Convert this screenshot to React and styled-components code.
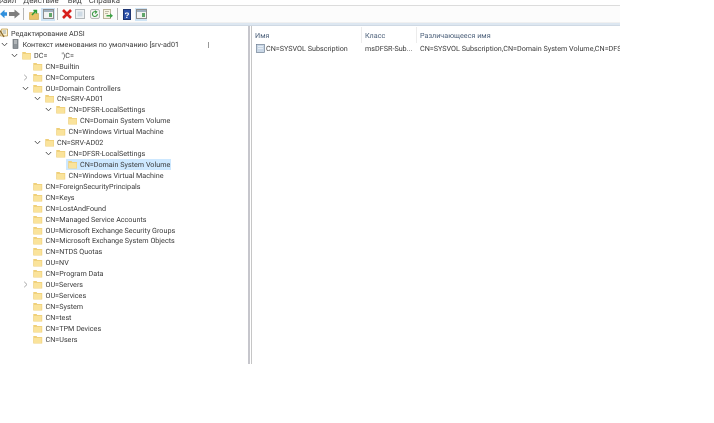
import React from "react";
import styled, { createGlobalStyle } from "styled-components";

const Global = createGlobalStyle`
  html, body { margin: 0; padding: 0; background: #fff; }
  body {
    font-family: Roboto, "Noto Sans", sans-serif;
    color: #3a3a3a;
    text-rendering: geometricPrecision;
  }
`;

const Window = styled.div`
  width: 620px;
  height: 364px;
  display: flex;
  flex-direction: column;
  overflow: hidden;
  background: #fff;
  filter: blur(0.3px);
`;

const Menu = styled.div`
  height: 5px;
  display: flex;
  overflow: hidden;
  font-size: 7.8px;
  line-height: 1px;
  color: #444;
  flex: none;
  border-bottom: 1px solid #dcdcdc;
`;

const MenuItem = styled.span`
  display: block;
  margin-left: ${(p) => p.$ml || 0}px;
`;

const Toolbar = styled.div`
  height: 16px;
  flex: none;
  display: flex;
  align-items: center;
  background: #fcfcfc;
  border-bottom: 1px solid #f0f0f0;
`;

const Tool = styled.span`
  width: ${(p) => p.$w || 10}px;
  height: 13px;
  margin-left: ${(p) => p.$ml ?? 0}px;
  flex: none;
  display: flex;
  align-items: center;
  justify-content: center;
  background: ${(p) => (p.$on ? "#cfe4f5" : "transparent")};
`;

const ToolSep = styled.span`
  width: 1px;
  height: 12px;
  margin-left: ${(p) => p.$ml}px;
  flex: none;
  background: #b5b5b5;
`;

const Band = styled.div`
  height: 2px;
  flex: none;
  background: #dde7f1;
  border-bottom: 1px solid #cfd9e4;
`;

const Split = styled.div`
  flex: 1;
  min-height: 0;
  display: flex;
`;

const TreePane = styled.div`
  width: 248px;
  flex: none;
  padding-top: 2px;
  overflow: hidden;
`;

const Splitter = styled.div`
  width: 1px;
  flex: none;
  border-left: 2px solid #c6c6cc;
  border-right: 1px solid #c6c6c6;
`;

const ListPane = styled.div`
  flex: 1;
  min-width: 0;
  overflow: hidden;
`;

const TreeRow = styled.div`
  height: 10.93px;
  display: flex;
  align-items: center;
  font-size: 7.2px;
  white-space: pre;
  padding-left: ${(p) => p.$x}px;
`;

const Arrow = styled.span`
  width: 8px;
  margin-right: 3.5px;
  flex: none;
  display: flex;
  align-items: center;
  justify-content: center;
`;

const Item = styled.span`
  display: flex;
  align-items: center;
  height: 10.5px;
  padding-left: ${(p) => (p.$sel ? 1.5 : 0)}px;
  margin-left: ${(p) => (p.$sel ? -1.5 : 0)}px;
  background: ${(p) => (p.$sel ? "#cde8ff" : "transparent")};
`;

const Label = styled.span`
  margin-left: 2px;
  padding: 0 1px;
`;

const ListGrid = styled.div`
  display: grid;
  grid-template-columns: 110px 55px 300px;
  margin-top: 1px;
  white-space: nowrap;
  font-size: 7.2px;
`;

const Head = styled.div`
  height: 16px;
  padding-left: 3px;
  display: flex;
  align-items: center;
  color: #4c607a;
  border-right: 1px solid #ececec;
  overflow: hidden;
`;

const Cell = styled.div`
  height: 10px;
  padding-left: 3px;
  display: flex;
  align-items: center;
  overflow: hidden;
`;

const ObjWrap = styled.span`
  margin: 0 1px 0 1px;
  display: flex;
  flex: none;
`;

const Folder = () => (
  <svg width="9.5" height="9" viewBox="0 0 10 9" style={{ flex: "none" }}>
    <path d="M.3 .8h3.4l.8 1h5.2v7H.3z" fill="#efcf78" />
    <path d="M1 2.8h8v5.4H1z" fill="#fae39b" />
  </svg>
);

const Chevron = ({ open }) => (
  <svg width="7" height="7" viewBox="0 0 7 7">
    {open ? (
      <path d="M.8 2l2.7 2.8L6.2 2" fill="none" stroke="#555" strokeWidth="1" />
    ) : (
      <path d="M2.2 .8L5 3.5 2.2 6.2" fill="none" stroke="#a6a6a6" strokeWidth="1" />
    )}
  </svg>
);

const Server = () => (
  <svg width="8" height="10" viewBox="0 0 8 10" style={{ flex: "none" }}>
    <rect x="1" y=".5" width="5" height="9" fill="#8e9499" stroke="#60666b" strokeWidth=".6" />
    <rect x="2" y="1.5" width="3" height="1" fill="#d5d8da" />
    <rect x="2" y="3.5" width="3" height="1" fill="#d5d8da" />
  </svg>
);

const Console = () => (
  <svg width="8" height="10" viewBox="0 0 8 10" style={{ flex: "none" }}>
    <path d="M1.5 1h6v7H.5z" fill="#fff4d2" stroke="#b58f3c" strokeWidth=".7" />
    <path d="M0 2.5l4 6.5" stroke="#8a6b2e" strokeWidth="1.4" />
    <path d="M2.5 3h3.5M3 5h3" stroke="#6b86a8" strokeWidth=".7" />
  </svg>
);

const Obj = () => (
  <svg width="9" height="9" viewBox="0 0 9 9">
    <rect x=".5" y=".5" width="8" height="8" fill="#c9d7e6" stroke="#6f8094" strokeWidth=".7" />
    <path d="M2 2.5h5M2 4.5h5" stroke="#eef3f8" strokeWidth=".8" />
  </svg>
);

const PaneIcon = () => (
  <svg width="11" height="10" viewBox="0 0 11 10">
    <rect x=".5" y=".5" width="10" height="9" fill="#f2f2f2" stroke="#8d8d8d" />
    <rect x="1" y="1" width="9" height="2" fill="#9fb0bf" />
    <rect x="6" y="4" width="3" height="4" fill="#5fa56a" />
  </svg>
);

const rows = [
  { x: 0, icon: "console", t: "Редактирование ADSI" },
  { x: 0, arrow: "open", icon: "server", t: "Контекст именования по умолчанию [srv-ad01                |" },
  { x: 10, arrow: "open", t: "DC=        ')C=" },
  { x: 21.5, arrow: "none", t: "CN=Builtin" },
  { x: 21.5, arrow: "closed", t: "CN=Computers" },
  { x: 21.5, arrow: "open", t: "OU=Domain Controllers" },
  { x: 33, arrow: "open", t: "CN=SRV-AD01" },
  { x: 44.5, arrow: "open", t: "CN=DFSR-LocalSettings" },
  { x: 56, arrow: "none", t: "CN=Domain System Volume" },
  { x: 44.5, arrow: "none", t: "CN=Windows Virtual Machine" },
  { x: 33, arrow: "open", t: "CN=SRV-AD02" },
  { x: 44.5, arrow: "open", t: "CN=DFSR-LocalSettings" },
  { x: 56, arrow: "none", t: "CN=Domain System Volume", sel: true },
  { x: 44.5, arrow: "none", t: "CN=Windows Virtual Machine" },
  ...[
    "CN=ForeignSecurityPrincipals",
    "CN=Keys",
    "CN=LostAndFound",
    "CN=Managed Service Accounts",
    "OU=Microsoft Exchange Security Groups",
    "CN=Microsoft Exchange System Objects",
    "CN=NTDS Quotas",
    "OU=NV",
    "CN=Program Data",
  ].map((t) => ({ x: 21.5, arrow: "none", t })),
  { x: 21.5, arrow: "closed", t: "OU=Servers" },
  ...["OU=Services", "CN=System", "CN=test", "CN=TPM Devices", "CN=Users"].map((t) => ({
    x: 21.5,
    arrow: "none",
    t,
  })),
];

export default function App() {
  return (
    <>
      <Global />
      <Window>
        <Menu>
          <MenuItem $ml={-3}>Файл</MenuItem>
          <MenuItem $ml={7}>Действие</MenuItem>
          <MenuItem $ml={9}>Вид</MenuItem>
          <MenuItem $ml={7}>Справка</MenuItem>
        </Menu>
        <Toolbar>
          <Tool $w={7}>
            <svg width="7" height="10" viewBox="0 0 7 10">
              <path d="M7 3.2H4.5V.8L0 5l4.5 4.2V6.8H7z" fill="#2f8fdc" />
            </svg>
          </Tool>
          <Tool $w={11} $ml={2}>
            <svg width="11" height="10" viewBox="0 0 11 10">
              <path d="M0 3h5.5V.6L11 5 5.5 9.4V7H0z" fill="#7d7d7d" />
            </svg>
          </Tool>
          <ToolSep $ml={3} />
          <Tool $ml={5}>
            <svg width="10" height="11" viewBox="0 0 10 11">
              <path d="M.5 3.5h3l1 1h5v6H.5z" fill="#e9c267" stroke="#c9a24e" strokeWidth=".6" />
              <path d="M3 6L6.6 2M4.4 1.4h3v3" fill="none" stroke="#2f9a35" strokeWidth="1.5" />
            </svg>
          </Tool>
          <Tool $on $w={14} $ml={2}>
            <PaneIcon />
          </Tool>
          <ToolSep $ml={2} />
          <Tool $ml={4}>
            <svg width="10" height="10" viewBox="0 0 10 10">
              <path d="M1 1l8 8M9 1l-8 8" stroke="#d8201c" strokeWidth="2.6" />
            </svg>
          </Tool>
          <Tool $ml={3}>
            <svg width="10" height="10" viewBox="0 0 10 10">
              <rect x=".5" y=".5" width="9" height="9" fill="#eef1f3" stroke="#b3b8bb" />
              <rect x="2.5" y="2.5" width="5" height="5" fill="#cfdbe5" />
            </svg>
          </Tool>
          <Tool $ml={5}>
            <svg width="10" height="10" viewBox="0 0 10 10">
              <rect x=".5" y=".5" width="9" height="9" rx="1.5" fill="#f3f3f3" stroke="#b9b9b9" />
              <path d="M7.4 5A2.5 2.5 0 1 1 6.2 2.9M4.9 1.6L6.7 2.9 5.1 4.5" fill="none" stroke="#3d9b45" strokeWidth="1.1" />
            </svg>
          </Tool>
          <Tool $ml={3}>
            <svg width="10" height="10" viewBox="0 0 10 10">
              <rect x=".5" y=".5" width="7" height="9" fill="#f7f3e2" stroke="#b9b49c" />
              <path d="M2 2.5h4M2 4.5h3" stroke="#a8a48e" strokeWidth=".7" />
              <path d="M3.5 6h3.5V4.3l3 2.5-3 2.5V7.6H3.5z" fill="#3fa348" />
            </svg>
          </Tool>
          <ToolSep $ml={4} />
          <Tool $w={8} $ml={5}>
            <svg width="8" height="11" viewBox="0 0 8 11">
              <rect x=".5" y=".5" width="7" height="10" fill="#2b4fa8" stroke="#1d3472" />
              <text x="4" y="8.5" fontSize="8" fontWeight="700" fill="#fff" textAnchor="middle" fontFamily="Liberation Sans">?</text>
            </svg>
          </Tool>
          <Tool $on $w={12} $ml={4}>
            <PaneIcon />
          </Tool>
        </Toolbar>
        <Band />
        <Split>
          <TreePane>
            {rows.map((r, i) => (
              <TreeRow key={i} $x={r.x}>
                {r.arrow && (
                  <Arrow>
                    {r.arrow === "open" && <Chevron open />}
                    {r.arrow === "closed" && <Chevron />}
                  </Arrow>
                )}
                <Item $sel={r.sel}>
                  {r.icon === "console" ? <Console /> : r.icon === "server" ? <Server /> : <Folder />}
                  <Label>{r.t}</Label>
                </Item>
              </TreeRow>
            ))}
          </TreePane>
          <Splitter />
          <ListPane>
            <ListGrid>
              <Head>Имя</Head>
              <Head>Класс</Head>
              <Head>Различающееся имя</Head>
              <Cell>
                <ObjWrap>
                  <Obj />
                </ObjWrap>
                CN=SYSVOL Subscription
              </Cell>
              <Cell>msDFSR-Sub...</Cell>
              <Cell>CN=SYSVOL Subscription,CN=Domain System Volume,CN=DFSR-LocalSettings</Cell>
            </ListGrid>
          </ListPane>
        </Split>
      </Window>
    </>
  );
}
